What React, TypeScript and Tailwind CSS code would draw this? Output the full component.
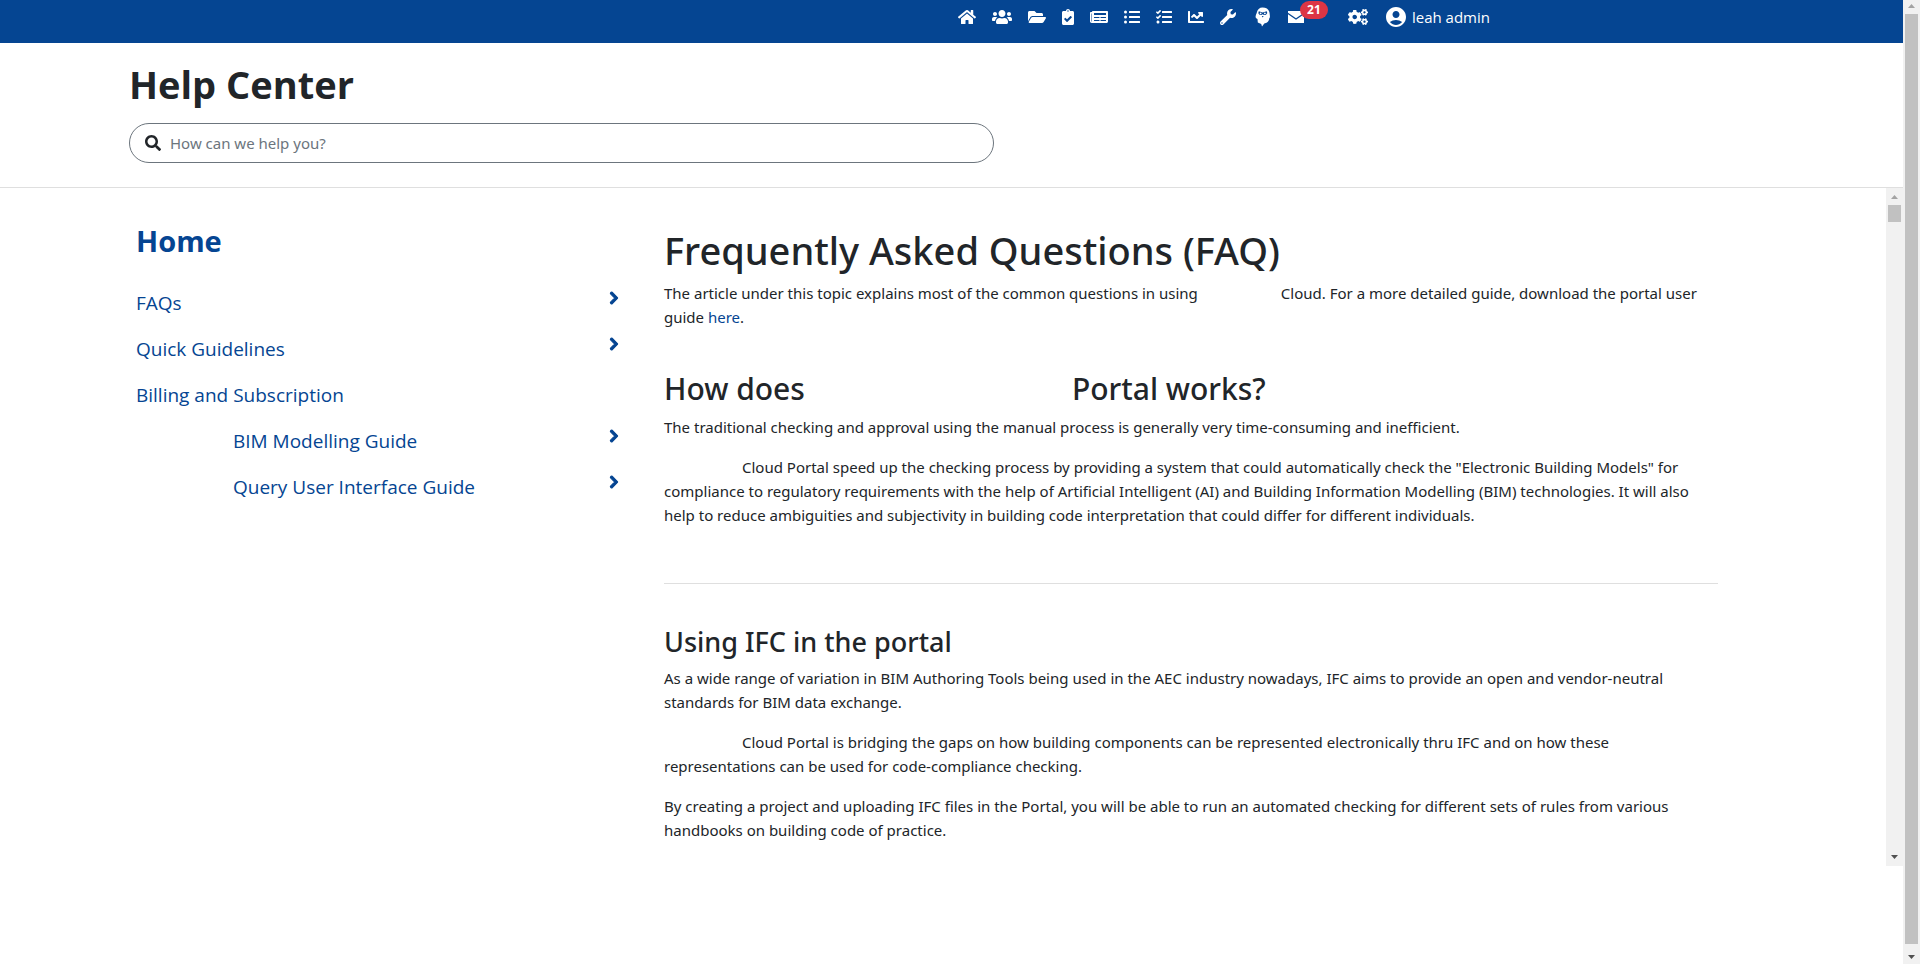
import React from "react";
import {
  FaHome,
  FaUsers,
  FaFolderOpen,
  FaClipboardCheck,
  FaNewspaper,
  FaListUl,
  FaTasks,
  FaChartLine,
  FaWrench,
  FaCogs,
  FaSearch,
  FaChevronRight,
} from "react-icons/fa";
import { MdAccountCircle } from "react-icons/md";

function MascotIcon() {
  return (
    <svg viewBox="0 0 20 20" className="h-5 w-5" aria-hidden="true">
      <path
        d="M10.500 .5c3.500 0 6 1.600 6.800 4.200.4 1.500.4 2.700 .6 4.300.2 1-.2 2-.6 2.300-.2 2-1.200 3.800-2.700 4.500l-2.300.6-2.300 3.100-.8-2.500-3.400-1.500-.3-3.600c-1.400-.3-2-1.300-1.900-2.700.1-1.200.6-2 1-3C5.300 2.300 7.500.5 10.500.5z"
        fill="#fff"
      />
      <path d="M6.800 4.300l3.900 1.200 4-1.200.6 1.800-1.500 2h-1.900L10.700 7.200 9.500 8.100H7.800L6.300 6.200z" fill="#054592" />
      <circle cx="8.600" cy="6.400" r=".9" fill="#fff" />
      <circle cx="12.900" cy="6.400" r=".9" fill="#fff" />
      <path d="M9.800 9h1.800l-.9 1.500z" fill="#054592" />
    </svg>
  );
}

function MailIcon() {
  return (
    <svg viewBox="0 0 16 12" className="h-3 w-4" aria-hidden="true">
      <path d="M0 0h16v1.800L8 7.300 0 1.800z" fill="#fff" />
      <path d="M0 3.200l8 5.500 8-5.500V12H0z" fill="#fff" />
    </svg>
  );
}

const navItems = [
  { label: "Home", icon: <FaHome className="h-4 w-[18px]" /> },
  { label: "Users", icon: <FaUsers className="h-4 w-5" /> },
  { label: "Projects", icon: <FaFolderOpen className="h-4 w-[18px]" /> },
  { label: "Approvals", icon: <FaClipboardCheck className="h-4 w-3" /> },
  { label: "News", icon: <FaNewspaper className="h-4 w-[18px]" /> },
  { label: "Lists", icon: <FaListUl className="h-4 w-4" /> },
  { label: "Tasks", icon: <FaTasks className="h-4 w-4" /> },
  { label: "Reports", icon: <FaChartLine className="h-4 w-4" /> },
  { label: "Tools", icon: <FaWrench className="h-4 w-4" /> },
  { label: "Assistant", icon: <MascotIcon /> },
];

const topics = [
  { text: "FAQs", indent: false, more: true },
  { text: "Quick Guidelines", indent: false, more: true },
  { text: "Billing and Subscription", indent: false, more: false },
  { text: "BIM Modelling Guide", indent: true, more: true },
  { text: "Query User Interface Guide", indent: true, more: true },
];

function Arrow({ down = false }: { down?: boolean }) {
  return (
    <svg viewBox="0 0 7 4" className="h-1 w-[7px]" aria-hidden="true">
      {down ? <path d="M0 0h7L3.500 4z" fill="#505050" /> : <path d="M0 4h7L3.500 0z" fill="#a3a3a3" />}
    </svg>
  );
}

function Gap({ className }: { className: string }) {
  return <span className={`inline-block ${className}`} />;
}

export default function App() {
  return (
    <div className="flex min-h-screen bg-white font-['Open_Sans','Noto_Sans',sans-serif] text-[15px] leading-6 text-[#212529]">
      <div className="flex min-w-0 flex-1 flex-col">
        <nav className="flex h-[43px] items-start justify-end bg-[#054592] pr-[413px] text-white">
          <div className="flex h-[34px] items-center gap-4">
            {navItems.map((item) => (
              <a key={item.label} href="#" aria-label={item.label}>
                {item.icon}
              </a>
            ))}
            <a href="#" aria-label="Messages" className="relative w-11">
              <MailIcon />
              <span className="absolute -top-2.5 left-3 flex h-[18px] w-7 items-center justify-center rounded-full bg-[#dc3545] text-xs font-bold">
                21
              </span>
            </a>
            <a href="#" aria-label="Settings">
              <FaCogs className="h-4 w-5" />
            </a>
            <a href="#" className="flex items-center gap-1 whitespace-nowrap">
              <MdAccountCircle className="h-6 w-6" />
              leah admin
            </a>
          </div>
        </nav>

        <header className="border-b border-[#dfdfdf] pt-[17px] pb-6 pl-[129px]">
          <h1 className="text-[38px] leading-12 font-bold">Help Center</h1>
          <label className="mt-[15px] flex h-10 w-[865px] max-w-full items-center gap-[9px] rounded-full border border-[#6c757d] px-[15px]">
            <FaSearch className="h-4 w-4" />
            <input
              type="search"
              aria-label="Search help"
              placeholder="How can we help you?"
              className="min-w-0 flex-1 bg-transparent font-['Noto_Sans','Open_Sans',sans-serif] outline-none placeholder:text-[#6c757d]"
            />
          </label>
        </header>

        <div className="flex h-[678px]">
          <div className="flex min-w-0 flex-1 pr-[168px] pl-[136px]">
            <aside className="w-[484px] shrink-0 pt-[35px] text-[#054592]">
              <h2 className="text-[29px] leading-9 font-bold">
                <a href="#">Home</a>
              </h2>
              <ul className="mt-[21px] text-[19px]">
                {topics.map((t) => (
                  <li key={t.text} className="h-[46px]">
                    <a href="#" className={`flex justify-between ${t.indent ? "pl-[97px]" : ""}`}>
                      <span className="leading-[46px]">{t.text}</span>
                      {t.more && <FaChevronRight className="mt-[11px] h-3.5 w-3 stroke-current stroke-[40]" />}
                    </a>
                  </li>
                ))}
              </ul>
            </aside>

            <main className="ml-11 flex-1 pt-[38px] font-['Noto_Sans','Open_Sans',sans-serif]">
              <h1 className="mb-[7px] text-[38px] leading-12 font-medium">Frequently Asked Questions (FAQ)</h1>
              <p className="max-w-[1038px]">
                The article under this topic explains most of the common questions in using
                <Gap className="w-[83px]" />
                Cloud. For a more detailed guide, download the portal user guide{" "}
                <a href="#" className="text-[#054592]">
                  here
                </a>
                .
              </p>

              <h2 className="mt-[41px] mb-[7px] text-[30px] leading-[38px] font-medium">
                How does
                <Gap className="w-[267px]" />
                Portal works?
              </h2>
              <p className="mb-4 max-w-[1038px]">
                The traditional checking and approval using the manual process is generally very time-consuming and
                inefficient.
              </p>
              <p className="max-w-[1038px]">
                <Gap className="w-[78px]" />
                Cloud Portal speed up the checking process by providing a system that could automatically check the
                "Electronic Building Models" for compliance to regulatory requirements with the help of Artificial
                Intelligent (AI) and Building Information Modelling (BIM) technologies. It will also help to reduce
                ambiguities and subjectivity in building code interpretation that could differ for different
                individuals.
              </p>

              <hr className="mt-14 mb-[41px] border-[#dfdfdf]" />

              <h3 className="mb-[7px] text-[27px] leading-[34px] font-medium">Using IFC in the portal</h3>
              <p className="mb-4 max-w-[1038px]">
                As a wide range of variation in BIM Authoring Tools being used in the AEC industry nowadays, IFC aims to
                provide an open and vendor-neutral standards for BIM data exchange.
              </p>
              <p className="mb-4 max-w-[1038px]">
                <Gap className="w-[78px]" />
                Cloud Portal is bridging the gaps on how building components can be represented electronically thru IFC
                and on how these representations can be used for code-compliance checking.
              </p>
              <p className="max-w-[1038px]">
                By creating a project and uploading IFC files in the Portal, you will be able to run an automated
                checking for different sets of rules from various handbooks on building code of practice.
              </p>
            </main>
          </div>
          <div className="flex w-[17px] flex-col items-center justify-between bg-[#f1f1f1] py-[7px]">
            <div className="flex flex-col items-center gap-1.5">
              <Arrow />
              <div className="h-[17px] w-[13px] bg-[#c1c1c1]" />
            </div>
            <Arrow down />
          </div>
        </div>
      </div>
      <div className="flex w-[17px] flex-col items-center gap-[11px] bg-[#f1f1f1] pt-1 pb-[5px]">
        <Arrow />
        <div className="-mt-[5px] w-[13px] flex-1 bg-[#c1c1c1]" />
        <Arrow down />
      </div>
    </div>
  );
}
